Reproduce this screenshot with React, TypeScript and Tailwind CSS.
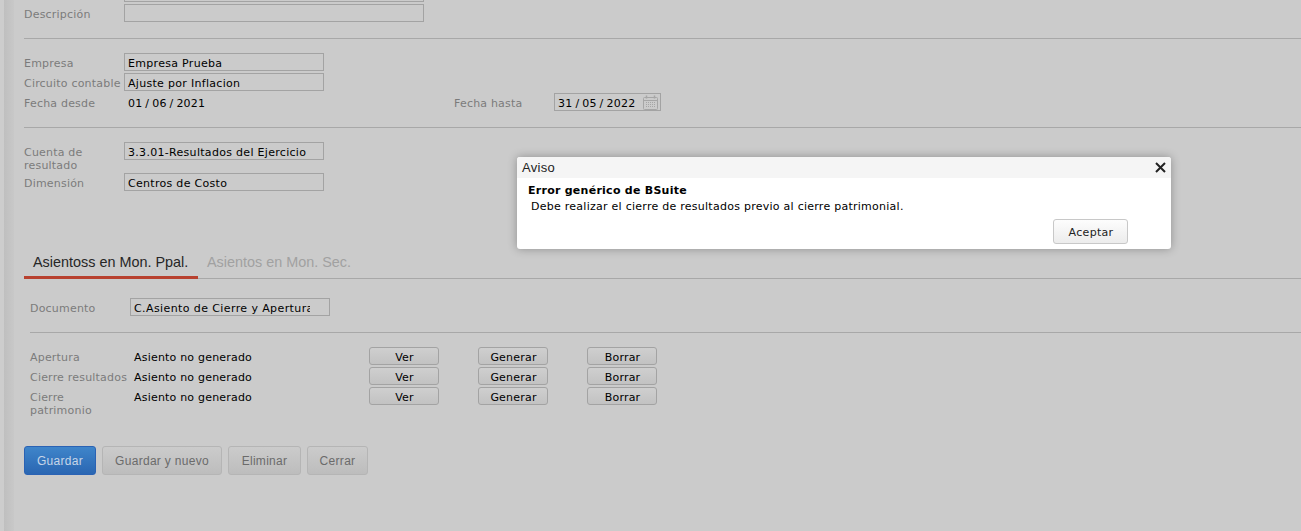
const labelCls = "w-[100px] shrink-0 pt-[4px] text-[11px] leading-[13px] tracking-[0.2px] text-[#7b7b7b]";
const inputCls =
  "h-[18px] border border-[#a3a3a3] pl-[3px] text-[11px] leading-[19px] tracking-[0.3px] text-black overflow-hidden whitespace-nowrap";
const plainValueCls = "shrink-0 pl-[4px] pt-[4px] text-[11px] leading-[13px] tracking-[0.2px] text-black";

function Field({ label, value, width = "w-[200px]" }: { label: string; value?: string; width?: string }) {
  return (
    <div className="flex items-start">
      <div className={labelCls}>{label}</div>
      <div className={`${inputCls} ${width}`}>{value}</div>
    </div>
  );
}

function CalendarIcon() {
  return (
    <svg width="15" height="15" viewBox="0 0 15 15" className="absolute right-[2px] top-[1px]" fill="none" stroke="#a6a6a6" strokeWidth="1">
      <rect x="0.5" y="2.5" width="14" height="12" rx="1" />
      <path d="M0.5 5.5h14" />
      <path d="M3.5 0.5v3M11.5 0.5v3" strokeWidth="1.5" />
      <path d="M3 7.5h9M3 9.5h9M3 11.5h9" strokeDasharray="1 1" />
    </svg>
  );
}

function SmallButton({ children }: { children: string }) {
  return (
    <button className="h-[18px] w-[70px] rounded-[3px] border border-[#a3a3a3] bg-gradient-to-b from-[#cfcfcf] to-[#c2c2c2] pl-[1px] pt-[2px] text-center text-[11px] leading-[16px] tracking-[0.2px] text-black">
      {children}
    </button>
  );
}

function AsientoRow({ label, second }: { label: string; second?: string }) {
  return (
    <div className="flex items-start">
      <div className={labelCls}>
        {label}
        {second && (
          <>
            <br />
            {second}
          </>
        )}
      </div>
      <div className={`${plainValueCls} w-[239px]`}>Asiento no generado</div>
      <div className="flex gap-[39px]">
        <SmallButton>Ver</SmallButton>
        <SmallButton>Generar</SmallButton>
        <SmallButton>Borrar</SmallButton>
      </div>
    </div>
  );
}

function ActionButton({ children, width }: { children: string; width: string }) {
  return (
    <button
      className={`${width} h-[29px] rounded-[3px] border border-[#b5b5b5] bg-gradient-to-b from-[#cbcbcb] to-[#bdbdbd] text-center text-[12px] tracking-[0.3px] text-[#6b6b6b]`}
    >
      {children}
    </button>
  );
}

export default function App() {
  return (
    <div className="relative flex h-[531px] overflow-hidden bg-[#cbcbcb] font-['DejaVu_Sans',sans-serif]">
      <div className="w-[4px] shrink-0 bg-[#cdcdcd]" />
      <div className="w-[10px] shrink-0 bg-gradient-to-r from-[#bfbfbf] to-[#c8c8c8]" />

      <div className="flex-1 pl-[10px]">
        <div className="ml-[100px] h-[2px] w-[300px] border-x border-b border-[#a3a3a3]" />
        <div className="mt-[2px]">
          <Field label="Descripción" width="w-[300px]" />
        </div>
        <div className="mt-[16px] h-[1px] bg-[#a8a8a8]" />

        <div className="mt-[14px] flex flex-col gap-[2px]">
          <Field label="Empresa" value="Empresa Prueba" />
          <Field label="Circuito contable" value="Ajuste por Inflacion" />
          <div className="flex items-start">
            <div className={labelCls}>Fecha desde</div>
            <div className={`${plainValueCls} w-[330px] [word-spacing:-0.75px]`}>01 / 06 / 2021</div>
            <div className={labelCls}>Fecha hasta</div>
            <div className={`${inputCls} relative w-[107px] [word-spacing:-1px]`}>
              31 / 05 / 2022
              <CalendarIcon />
            </div>
          </div>
        </div>
        <div className="mt-[16px] h-[1px] bg-[#a8a8a8]" />

        <div className="mt-[14px] flex flex-col gap-[1px]">
          <div className="flex items-start">
            <div className={labelCls}>
              Cuenta de
              <br />
              resultado
            </div>
            <div className={`${inputCls} w-[200px]`}>3.3.01-Resultados del Ejercicio</div>
          </div>
          <Field label="Dimensión" value="Centros de Costo" />
        </div>

        <div className="mt-[61px] flex h-[27px] whitespace-nowrap border-b border-[#a8a8a8] font-['Liberation_Sans',sans-serif] text-[14.4px] leading-[20px]">
          <div className="h-[27px] w-[174px] shrink-0 border-b-[3px] border-[#b8412f] pl-[9px] text-[#262626]">Asientoss en Mon. Ppal.</div>
          <div className="pl-[9px] text-[#a1a1a1]">Asientos en Mon. Sec.</div>
        </div>

        <div className="pl-[6px]">
          <div className="mt-[19px] flex items-start">
            <div className={labelCls}>Documento</div>
            <div className={`${inputCls} w-[200px] tracking-[0.4px]`}>
              <div className="w-[176px] overflow-hidden">C.Asiento de Cierre y Apertura</div>
            </div>
          </div>
          <div className="mt-[16px] h-[1px] bg-[#a8a8a8]" />
          <div className="mt-[14px] flex flex-col gap-[2px]">
            <AsientoRow label="Apertura" />
            <AsientoRow label="Cierre resultados" />
            <AsientoRow label="Cierre" second="patrimonio" />
          </div>
        </div>

        <div className="mt-[29px] flex gap-[6px] font-['Liberation_Sans',sans-serif]">
          <button className="h-[29px] w-[72px] rounded-[3px] border border-[#2a62b4] bg-gradient-to-b from-[#3f85ca] to-[#2a66b2] text-center text-[12px] tracking-[0.3px] text-[#c6d6e8]">
            Guardar
          </button>
          <ActionButton width="w-[120px]">Guardar y nuevo</ActionButton>
          <ActionButton width="w-[73px]">Eliminar</ActionButton>
          <ActionButton width="w-[61px]">Cerrar</ActionButton>
        </div>
      </div>

      {/* modal de aviso */}
      <div className="absolute left-[517px] top-[157px] h-[92px] w-[654px] overflow-hidden rounded-[3px] bg-white shadow-[0_0_10px_rgba(0,0,0,0.3)]">
        <div className="flex h-[21px] items-center justify-between bg-[#f5f5f5] pl-[5px] pr-[5px] font-['Liberation_Sans',sans-serif] text-[13px] tracking-[0.3px] text-[#222]">
          <span>Aviso</span>
          <svg width="11" height="11" viewBox="0 0 11 11" stroke="#222" strokeWidth="2" fill="none">
            <path d="M1 1l9 9M10 1l-9 9" />
          </svg>
        </div>
        <div className="pl-[11px] pt-[6px] text-[11px] leading-[14px] tracking-[0.26px] text-black">
          <div className="font-bold">Error genérico de BSuite</div>
          <div className="mt-[2px] pl-[3px]">Debe realizar el cierre de resultados previo al cierre patrimonial.</div>
        </div>
        <button className="absolute left-[536px] top-[62px] h-[25px] w-[75px] rounded-[3px] border border-[#c8c8c8] bg-gradient-to-b from-[#fdfdfd] to-[#ececec] pl-[1px] pt-[2px] text-center text-[11px] leading-[21px] tracking-[0.3px] text-[#222]">
          Aceptar
        </button>
      </div>
    </div>
  );
}
